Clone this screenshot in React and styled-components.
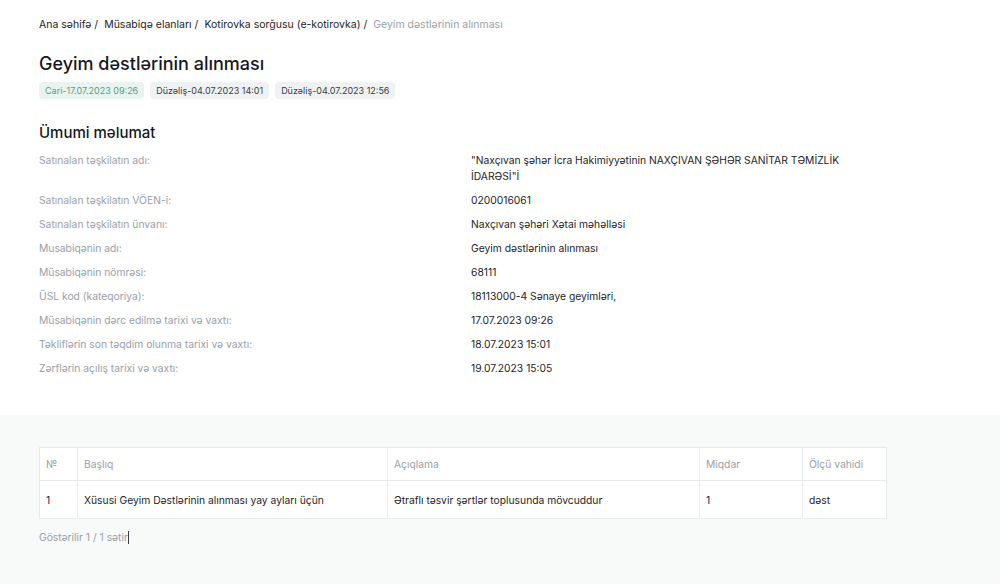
import React from 'react'
import styled, { createGlobalStyle } from 'styled-components'

const Global = createGlobalStyle`
  html, body {
    margin: 0;
    padding: 0;
    background: #fff;
    font-family: Inter, "Noto Sans", sans-serif;
    color: #1f2328;
  }
  #root {
    min-height: 584px;
    display: flex;
    flex-direction: column;
  }
`

const Top = styled.section`
  padding: 18px 39px 39px;
`

const Crumbs = styled.nav`
  display: flex;
  gap: 6px;
  font-size: 10.5px;
  line-height: 14px;
`

const Crumb = styled.span`
  color: ${p => (p.current ? '#9aa0a8' : '#1f2328')};
`

const Title = styled.h1`
  margin: 20px 0 0;
  font-size: 18px;
  line-height: 24px;
  font-weight: 500;
  color: #15181c;
`

const Tags = styled.div`
  display: flex;
  gap: 6px;
  margin-top: 6px;
`

const Tag = styled.span`
  padding: 0 6px;
  height: 17px;
  display: inline-flex;
  align-items: center;
  border-radius: 4px;
  font-size: 9px;
  background: ${p => (p.current ? '#e9f4f0' : '#f0f1f3')};
  color: ${p => (p.current ? '#5c9c83' : '#3a3f45')};
`

const Heading = styled.h2`
  margin: 24px 0 0;
  font-size: 15px;
  line-height: 20px;
  font-weight: 500;
  color: #15181c;
`

const Info = styled.dl`
  display: grid;
  grid-template-columns: 432px 400px;
  row-gap: 8px;
  margin: 9px 0 0;
  font-size: 10.3px;
  line-height: 16px;
`

const Label = styled.dt`
  color: #9aa0a8;
`

const Value = styled.dd`
  margin: 0;
  color: #1f2328;
`

const Bottom = styled.section`
  flex: 1;
  background: #f8f9f9;
  padding: 32px 39px 30px;
`

const Table = styled.table`
  width: 847px;
  table-layout: fixed;
  border-collapse: collapse;
  background: #fff;
  font-size: 10.3px;
`

const Th = styled.th`
  box-sizing: border-box;
  height: 33px;
  padding: 0 6px;
  text-align: left;
  font-weight: 400;
  color: #9aa0a8;
  border: 1px solid #e8e9eb;
  width: ${p => p.w}px;
`

const Td = styled.td`
  height: 37px;
  padding: 0 6px;
  color: #1f2328;
  border: 1px solid #e8e9eb;
`

const Footer = styled.p`
  margin: 11px 0 0;
  font-size: 10.3px;
  line-height: 14px;
  color: #9aa0a8;
`

const Caret = styled.span`
  display: inline-block;
  width: 1px;
  height: 13px;
  background: #3a3f45;
  vertical-align: -3px;
`

const info = [
  ['Satınalan təşkilatın adı:', '"Naxçıvan şəhər İcra Hakimiyyətinin NAXÇIVAN ŞƏHƏR SANİTAR TƏMİZLİK İDARƏSİ"İ'],
  ['Satınalan təşkilatın VÖEN-i:', '0200016061'],
  ['Satınalan təşkilatın ünvanı:', 'Naxçıvan şəhəri Xətai məhəlləsi'],
  ['Musabiqənin adı:', 'Geyim dəstlərinin alınması'],
  ['Müsabiqənin nömrəsi:', '68111'],
  ['ÜSL kod (kateqoriya):', '18113000-4 Sənaye geyimləri,'],
  ['Müsabiqənin dərc edilmə tarixi və vaxtı:', '17.07.2023 09:26'],
  ['Təkliflərin son təqdim olunma tarixi və vaxtı:', '18.07.2023 15:01'],
  ['Zərflərin açılış tarixi və vaxtı:', '19.07.2023 15:05'],
]

const columns = [
  ['№', 38],
  ['Başlıq', 310],
  ['Açıqlama', 312],
  ['Miqdar', 103],
  ['Ölçü vahidi', 84],
]

export default function App() {
  return (
    <>
      <Global />
      <Top>
        <Crumbs>
          <Crumb>Ana səhifə /</Crumb>
          <Crumb>Müsabiqə elanları /</Crumb>
          <Crumb>Kotirovka sorğusu (e-kotirovka) /</Crumb>
          <Crumb current>Geyim dəstlərinin alınması</Crumb>
        </Crumbs>
        <Title>Geyim dəstlərinin alınması</Title>
        <Tags>
          <Tag current>Cari-17.07.2023 09:26</Tag>
          <Tag>Düzəliş-04.07.2023 14:01</Tag>
          <Tag>Düzəliş-04.07.2023 12:56</Tag>
        </Tags>
        <Heading>Ümumi məlumat</Heading>
        <Info>
          {info.map(([k, v]) => (
            <React.Fragment key={k}>
              <Label>{k}</Label>
              <Value>{v}</Value>
            </React.Fragment>
          ))}
        </Info>
      </Top>
      <Bottom>
        <Table>
          <thead>
            <tr>
              {columns.map(([name, w]) => (
                <Th key={name} w={w}>{name}</Th>
              ))}
            </tr>
          </thead>
          <tbody>
            <tr>
              <Td>1</Td>
              <Td>Xüsusi Geyim Dəstlərinin alınması yay ayları üçün</Td>
              <Td>Ətraflı təsvir şərtlər toplusunda mövcuddur</Td>
              <Td>1</Td>
              <Td>dəst</Td>
            </tr>
          </tbody>
        </Table>
        <Footer>Göstərilir 1 / 1 sətir<Caret /></Footer>
      </Bottom>
    </>
  )
}
